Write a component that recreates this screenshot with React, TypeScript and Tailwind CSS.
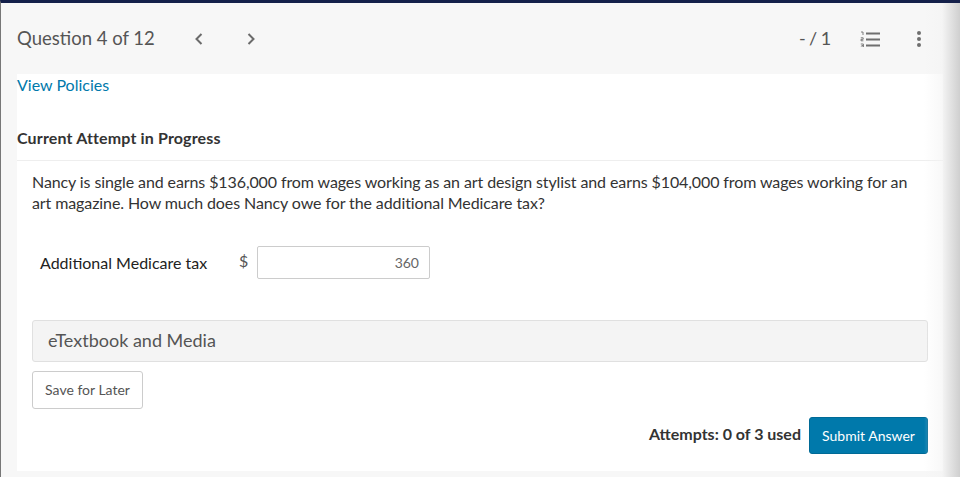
const NumberedList = () => (
  <svg width="20" height="16" viewBox="0 0 20 16" fill="none" className="text-[#6f6f6f]">
    <path d="M6 2.5h14M6 8.5h14M6 14.5h14" stroke="currentColor" strokeWidth="1.8" />
    <path d="M1 1h2v3M0.8 6.8h2.4v1.5H1v1.5h2.4M0.8 13h2.6v3H0.8M1.5 14.5h1.9" stroke="currentColor" strokeWidth="0.9" />
  </svg>
);

const Chevron = ({ right }: { right?: boolean }) => (
  <svg width="10" height="14" viewBox="0 0 10 14" fill="none" className="text-[#6b6b6b]">
    <path
      d={right ? "M2.5 2 L7.5 7 L2.5 12" : "M7.5 2 L2.5 7 L7.5 12"}
      stroke="currentColor"
      strokeWidth="2"
    />
  </svg>
);

export default function App() {
  return (
    <div className="relative h-[477px] w-[960px] overflow-hidden border-l-[1px] border-t-[3px] border-l-[#777] border-t-[#14204a] bg-[#f7f7f7] font-['Lato',sans-serif]">
      {/* Cabecera */}
      <div className="flex h-[71px] items-center pl-[16px] pr-[39px]">
        <span className="w-[177px] text-[18.5px] text-[#555]">Question 4 of 12</span>
        <Chevron />
        <span className="w-[42px]" />
        <Chevron right />
        <span className="ml-auto w-[61px] text-[18px] tracking-[-0.6px] text-[#555]">- / 1</span>
        <NumberedList />
        <div className="ml-[37px] flex flex-col gap-[2px]">
          <span className="h-[4px] w-[4px] rounded-full bg-[#6f6f6f]" />
          <span className="h-[4px] w-[4px] rounded-full bg-[#6f6f6f]" />
          <span className="h-[4px] w-[4px] rounded-full bg-[#6f6f6f]" />
        </div>
      </div>

      {/* Tarjeta */}
      <div className="ml-[16px] h-[397px] w-[926px] bg-white">
        <a className="block text-[16px] leading-[22px] text-[#0079ab]">View Policies</a>
        <h3 className="mt-[31px] border-b border-[#eee] pb-[11px] text-[16px] font-bold leading-[22px] tracking-[0.15px] text-[#333]">
          Current Attempt in Progress
        </h3>

        <div className="px-[15px]">
          <p className="mt-[10px] pr-[16px] text-[16px] leading-[21px] tracking-[-0.1px] text-[#333]">
            Nancy is single and earns $136,000 from wages working as an art design stylist and earns $104,000 from wages working for an art magazine. How much does Nancy owe for the additional Medicare tax?
          </p>

          <div className="mt-[33px] flex h-[33px] items-center pl-[8px]">
            <span className="w-[199px] text-[16px] text-[#222]">Additional Medicare tax</span>
            <span className="w-[18px] pb-[3px] text-[16px] text-[#555]">$</span>
            <div className="flex h-[33px] w-[173px] items-center justify-end rounded-[2px] border border-[#ccc] pr-[10px] text-[14px] text-[#666]">
              360
            </div>
          </div>

          <div className="mt-[41px] flex h-[42px] items-center rounded-[3px] border border-[#e0e0e0] bg-[#f4f4f4] pb-[2px] pl-[15px] text-[18px] text-[#555]">
            eTextbook and Media
          </div>

          <button className="mt-[9px] block h-[38px] w-[111px] rounded-[3px] border border-[#ccc] bg-white pb-[2px] text-[14px] text-[#555]">
            Save for Later
          </button>

          <div className="mt-[8px] flex items-center justify-end gap-[8px]">
            <span className="pb-[4px] text-[16px] font-bold text-[#333]">Attempts: 0 of 3 used</span>
            <button className="h-[37px] w-[119px] rounded-[3px] border border-[#006a96] bg-[#0079ab] text-[14px] text-white">
              Submit Answer
            </button>
          </div>
        </div>
      </div>

      {/* Sombra del borde derecho */}
      <div className="pointer-events-none absolute bottom-0 right-0 top-0 w-[36px] bg-gradient-to-r from-transparent via-[#f3f3f3]/60 to-[#cfcfcf]" />
    </div>
  );
}
